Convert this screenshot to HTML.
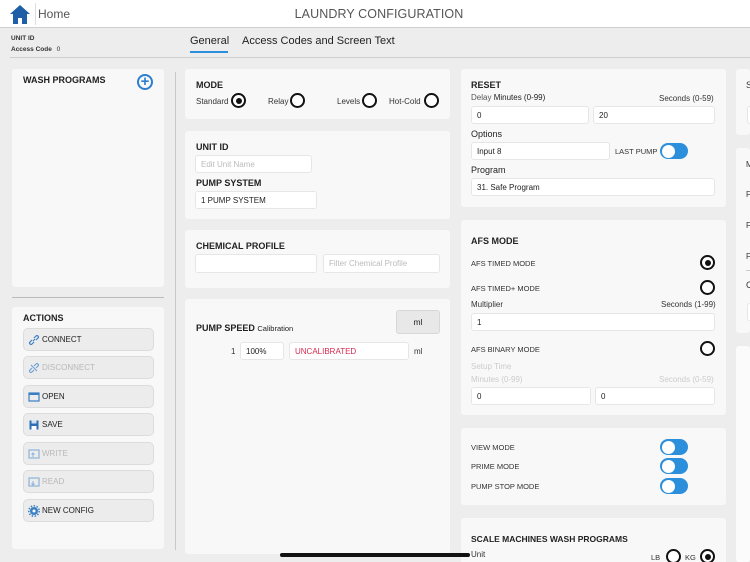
<!DOCTYPE html>
<html style="width:750px;height:562px;overflow:hidden"><head><meta charset="utf-8"><style>
*{box-sizing:border-box;margin:0;padding:0}
body{width:750px;height:562px;overflow:hidden;background:#ededed;font-family:"Liberation Sans",sans-serif;color:#222;position:relative}
.a{position:absolute}
.card{position:absolute;background:#f8f8f8;border-radius:3px}
.h{font-size:9px;font-weight:bold;color:#222}
.t{font-size:8px;color:#333;white-space:nowrap}
.in{position:absolute;background:#fff;border:1px solid #e6e6e6;border-radius:3px;font-size:8px;padding-left:5px;display:flex;align-items:center;color:#222}
.rad{position:absolute;width:15px;height:15px;border:2px solid #111;border-radius:50%;background:#fff}
.rad.on::after{content:"";position:absolute;left:2.5px;top:2.5px;width:6px;height:6px;border-radius:50%;background:#111}
.tg{position:absolute;width:28px;height:16px;border-radius:8px;background:#2c8fdc}
.tg::after{content:"";position:absolute;left:1.5px;top:1.5px;width:13px;height:13px;border-radius:50%;background:#fff}
.btn{position:absolute;left:23px;width:131px;height:23px;background:#ececec;border:1px solid #dcdcdc;border-radius:5px;font-size:8px;display:flex;align-items:center;padding-left:18px;color:#222}
.btn.d{color:#b8b8b8}
.btn svg{position:absolute;left:4px;top:5px}
</style></head><body>
<div class="a" style="left:0;top:0;width:750px;height:28px;background:#fff;border-bottom:1px solid #cfcfcf"></div>
<svg class="a" style="left:9px;top:4px" width="22" height="21" viewBox="0 0 22 21"><path d="M11 1 L21 10 L18 10 L18 20 L13 20 L13 14 L9 14 L9 20 L4 20 L4 10 L1 10 Z" fill="#1f5fa8"/></svg>
<div class="a" style="left:35px;top:3px;width:1px;height:22px;background:#ddd"></div>
<div class="a" style="left:38px;top:7px;font-size:12px;color:#555">Home</div>
<div class="a" style="left:0;width:758px;top:7px;text-align:center;font-size:12.5px;color:#555;letter-spacing:.1px">LAUNDRY CONFIGURATION</div>
<div class="a" style="left:11px;top:35px;font-size:6.5px;font-weight:bold;color:#333">UNIT ID</div>
<div class="a" style="left:11px;top:46px;font-size:6.5px;font-weight:bold;color:#333">Access Code <span style="font-weight:normal;margin-left:3px">0</span></div>
<div class="a" style="left:190px;top:35px;font-size:11px;color:#222">General</div>
<div class="a" style="left:190px;top:51px;width:38px;height:2px;background:#2c8fdc"></div>
<div class="a" style="left:242px;top:35px;font-size:11px;color:#222">Access Codes and Screen Text</div>
<div class="a" style="left:10px;top:57px;width:740px;height:1px;background:#cfcfcf"></div>

<div class="card" style="left:12px;top:69px;width:152px;height:218px"></div>
<div class="a h" style="left:23px;top:75px">WASH PROGRAMS</div>
<div class="a" style="left:137px;top:74px;width:16px;height:16px;border:2px solid #2c7fd0;border-radius:50%;color:#2c7fd0;font-size:15px;font-weight:bold;line-height:11px;text-align:center">+</div>
<div class="a" style="left:12px;top:297px;width:152px;height:1px;background:#bbb"></div>
<div class="card" style="left:12px;top:307px;width:152px;height:242px"></div>
<div class="a h" style="left:23px;top:313px">ACTIONS</div>
<div class="btn" style="top:328px"><svg width="12" height="12" viewBox="0 0 12 12"><path d="M5 7 L7 5 M4 6 L2 8 A1.4 1.4 0 0 0 4 10 L6 8 M6 4 L8 2 A1.4 1.4 0 0 1 10 4 L8 6" stroke="#3a7fc4" stroke-width="1.2" fill="none"/></svg>CONNECT</div>
<div class="btn d" style="top:356px"><svg width="12" height="12" viewBox="0 0 12 12"><path d="M4 6 L2 8 A1.4 1.4 0 0 0 4 10 L6 8 M6 4 L8 2 A1.4 1.4 0 0 1 10 4 L8 6 M3 3 L9 9" stroke="#6ea3d6" stroke-width="1.2" fill="none"/></svg>DISCONNECT</div>
<div class="btn" style="top:385px"><svg width="12" height="12" viewBox="0 0 12 12"><rect x="1" y="2" width="10" height="8" fill="none" stroke="#3a7fc4" stroke-width="1.2"/><rect x="1" y="2" width="10" height="2" fill="#3a7fc4"/></svg>OPEN</div>
<div class="btn" style="top:413px"><svg width="12" height="12" viewBox="0 0 12 12"><rect x="1.5" y="1.5" width="9" height="9" fill="#2d6fb5"/><rect x="3.5" y="1.5" width="5" height="3" fill="#cfe0f2"/><rect x="3.5" y="7" width="5" height="3.5" fill="#fff"/></svg>SAVE</div>
<div class="btn d" style="top:442px"><svg width="12" height="12" viewBox="0 0 12 12"><rect x="1" y="2" width="10" height="8" fill="none" stroke="#8db3d9" stroke-width="1.2"/><path d="M5 9 V5 M3.5 6.5 L5 5 L6.5 6.5" stroke="#8db3d9" fill="none"/></svg>WRITE</div>
<div class="btn d" style="top:470px"><svg width="12" height="12" viewBox="0 0 12 12"><rect x="1" y="2" width="10" height="8" fill="none" stroke="#8db3d9" stroke-width="1.2"/><path d="M5 5 V9 M3.5 7.5 L5 9 L6.5 7.5" stroke="#8db3d9" fill="none"/></svg>READ</div>
<div class="btn" style="top:499px"><svg width="12" height="12" viewBox="0 0 12 12"><circle cx="6" cy="6" r="4" fill="#3a7fc4"/><circle cx="6" cy="6" r="5.2" fill="none" stroke="#3a7fc4" stroke-width="1.5" stroke-dasharray="1.5 1.5"/><circle cx="6" cy="6" r="1.5" fill="#fff"/></svg>NEW CONFIG</div>
<div class="a" style="left:175px;top:72px;width:1px;height:478px;background:#c8c8c8"></div>

<div class="card" style="left:185px;top:69px;width:265px;height:50px"></div>
<div class="a h" style="left:196px;top:80px">MODE</div>
<div class="a t" style="left:196px;top:97px">Standard</div><div class="rad on" style="left:231px;top:93px"></div>
<div class="a t" style="left:268px;top:97px">Relay</div><div class="rad" style="left:290px;top:93px"></div>
<div class="a t" style="left:337px;top:97px">Levels</div><div class="rad" style="left:362px;top:93px"></div>
<div class="a t" style="left:389px;top:97px">Hot-Cold</div><div class="rad" style="left:424px;top:93px"></div>

<div class="card" style="left:185px;top:131px;width:265px;height:88px"></div>
<div class="a h" style="left:196px;top:142px">UNIT ID</div>
<div class="in" style="left:195px;top:155px;width:117px;height:18px;color:#bbb">Edit Unit Name</div>
<div class="a h" style="left:196px;top:178px">PUMP SYSTEM</div>
<div class="in" style="left:195px;top:191px;width:122px;height:18px">1 PUMP SYSTEM</div>

<div class="card" style="left:185px;top:230px;width:265px;height:58px"></div>
<div class="a h" style="left:196px;top:241px">CHEMICAL PROFILE</div>
<div class="in" style="left:195px;top:254px;width:122px;height:19px"></div>
<div class="in" style="left:323px;top:254px;width:117px;height:19px;color:#bbb">Filter Chemical Profile</div>

<div class="card" style="left:185px;top:299px;width:265px;height:255px"></div>
<div class="a" style="left:396px;top:310px;width:44px;height:24px;background:#e8e8e8;border:1px solid #d8d8d8;border-radius:3px;font-size:8.5px;text-align:center;line-height:22px">ml</div>
<div class="a h" style="left:196px;top:323px">PUMP SPEED <span style="font-weight:normal;font-size:7.5px">Calibration</span></div>
<div class="a t" style="left:231px;top:347px">1</div>
<div class="in" style="left:240px;top:342px;width:44px;height:18px">100%</div>
<div class="in" style="left:289px;top:342px;width:120px;height:18px;color:#d6294f">UNCALIBRATED</div>
<div class="a t" style="left:414px;top:347px">ml</div>

<div class="card" style="left:461px;top:69px;width:265px;height:138px"></div>
<div class="a h" style="left:471px;top:80px">RESET</div>
<div class="a t" style="left:471px;top:93px;color:#555">Delay <span style="color:#222">Minutes (0-99)</span></div>
<div class="a t" style="left:659px;top:94px">Seconds (0-59)</div>
<div class="in" style="left:471px;top:106px;width:118px;height:18px">0</div>
<div class="in" style="left:593px;top:106px;width:122px;height:18px">20</div>
<div class="a" style="left:471px;top:129px;font-size:9px;color:#222">Options</div>
<div class="in" style="left:471px;top:142px;width:139px;height:18px">Input 8</div>
<div class="a t" style="left:615px;top:147px;font-size:7.5px">LAST PUMP</div>
<div class="tg" style="left:660px;top:143px"></div>
<div class="a" style="left:471px;top:165px;font-size:9px;color:#222">Program</div>
<div class="in" style="left:471px;top:178px;width:244px;height:18px">31. Safe Program</div>

<div class="card" style="left:461px;top:220px;width:265px;height:195px"></div>
<div class="a h" style="left:471px;top:236px">AFS MODE</div>
<div class="a t" style="left:471px;top:259px;font-size:7.5px">AFS TIMED MODE</div><div class="rad on" style="left:700px;top:255px"></div>
<div class="a t" style="left:471px;top:284px;font-size:7.5px">AFS TIMED+ MODE</div><div class="rad" style="left:700px;top:280px"></div>
<div class="a t" style="left:471px;top:300px">Multiplier</div>
<div class="a t" style="left:661px;top:300px">Seconds (1-99)</div>
<div class="in" style="left:471px;top:313px;width:244px;height:18px">1</div>
<div class="a t" style="left:471px;top:345px;font-size:7.5px">AFS BINARY MODE</div><div class="rad" style="left:700px;top:341px"></div>
<div class="a t" style="left:471px;top:362px;color:#ccc">Setup Time</div>
<div class="a t" style="left:471px;top:375px;color:#ccc">Minutes (0-99)</div>
<div class="a t" style="left:659px;top:375px;color:#ccc">Seconds (0-59)</div>
<div class="in" style="left:471px;top:387px;width:120px;height:18px">0</div>
<div class="in" style="left:595px;top:387px;width:120px;height:18px">0</div>

<div class="card" style="left:461px;top:428px;width:265px;height:77px"></div>
<div class="a t" style="left:471px;top:443px;font-size:7.5px">VIEW MODE</div><div class="tg" style="left:660px;top:439px"></div>
<div class="a t" style="left:471px;top:462px;font-size:7.5px">PRIME MODE</div><div class="tg" style="left:660px;top:458px"></div>
<div class="a t" style="left:471px;top:482px;font-size:7.5px">PUMP STOP MODE</div><div class="tg" style="left:660px;top:478px"></div>

<div class="card" style="left:461px;top:518px;width:265px;height:44px;border-radius:3px 3px 0 0"></div>
<div class="a h" style="left:471px;top:534px;font-size:8.5px">SCALE MACHINES WASH PROGRAMS</div>
<div class="a t" style="left:471px;top:550px">Unit</div>
<div class="a t" style="left:651px;top:553px;font-size:7.5px">LB</div><div class="rad" style="left:666px;top:549px"></div>
<div class="a t" style="left:685px;top:553px;font-size:7.5px">KG</div><div class="rad on" style="left:700px;top:549px"></div>

<div class="card" style="left:736px;top:69px;width:14px;height:66px"></div>
<div class="a t" style="left:746px;top:80px;font-size:9px">S</div>
<div class="in" style="left:747px;top:106px;width:3px;height:18px"></div>
<div class="card" style="left:736px;top:148px;width:14px;height:185px"></div>
<div class="a t" style="left:746px;top:160px">M</div>
<div class="a t" style="left:746px;top:190px">F</div>
<div class="a t" style="left:746px;top:221px">F</div>
<div class="a t" style="left:746px;top:252px">F</div>
<div class="a" style="left:746px;top:270px;width:4px;height:1px;background:#ccc"></div>
<div class="a t" style="left:746px;top:280px;font-size:9px">C</div>
<div class="in" style="left:747px;top:303px;width:3px;height:18px"></div>
<div class="card" style="left:736px;top:346px;width:14px;height:216px;background:#fbfbfb"></div>

<div class="a" style="left:280px;top:553px;width:190px;height:4px;border-radius:2px;background:#111"></div>
</body></html>
